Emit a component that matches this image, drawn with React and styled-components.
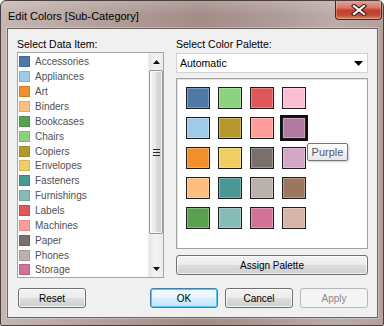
import React from "react";
import styled, { createGlobalStyle } from "styled-components";

const Global = createGlobalStyle`
  html, body { margin: 0; padding: 0; background: #ffffff; }
  body { font-family: "Liberation Sans", Arial, sans-serif; }
  * { box-sizing: border-box; }
`;

const Window = styled.div`
  width: 384px;
  height: 326px;
  border: 1px solid #4a3f3d;
  border-radius: 6px 6px 2px 2px;
  padding: 0 5px 7px 6px;
  display: flex;
  flex-direction: column;
  background:
    linear-gradient(to bottom, rgba(255,255,255,0.18) 0px, rgba(255,255,255,0) 14px),
    linear-gradient(to right, #c6b7b3 0%, #b09c98 30%, #a28c88 52%, #ad9995 70%, #bcaca8 88%, #b2a09c 100%);
  font-family: "Liberation Sans", Arial, sans-serif;
  overflow: hidden;
`;

const TitleBar = styled.div`
  height: 27px;
  display: flex;
  align-items: flex-start;
  padding-left: 1px;
`;

const Title = styled.div`
  font-size: 11px;
  color: #000;
  line-height: 14px;
  margin-top: 8px;
  flex: 1;
  white-space: nowrap;
`;

const CloseButton = styled.div`
  width: 47px;
  height: 20px;
  margin-top: -1px;
  margin-right: -4px;
  border: 1px solid #4d231d;
  border-top: none;
  border-radius: 0 0 4px 4px;
  background: linear-gradient(to bottom, #e7a89d 0%, #d67765 40%, #c2402e 55%, #c44a33 80%, #d88a6c 100%);
  box-shadow: inset 0 0 0 1px rgba(255,255,255,0.25);
  display: flex;
  align-items: center;
  justify-content: center;
`;

const Client = styled.div`
  flex: 1;
  border: 1px solid #6f625f;
  box-shadow: 0 0 0 1px rgba(255,255,255,0.3);
  background: #f0f0f0;
  display: flex;
  flex-direction: column;
  padding: 9px 9px 9px 9px;
`;

const Columns = styled.div`
  display: grid;
  grid-template-columns: 147px 192px;
  column-gap: 12px;
`;

const Column = styled.div`
  display: flex;
  flex-direction: column;
`;

const Label = styled.div`
  font-size: 10.5px;
  line-height: 12px;
  height: 14px;
  color: #000;
  white-space: nowrap;
`;

const ListBox = styled.div`
  height: 226px;
  border: 1px solid #a5a5a5;
  background: #fff;
  display: flex;
`;

const Items = styled.div`
  flex: 1;
  overflow: hidden;
  padding-top: 1.5px;
`;

const Item = styled.div`
  height: 14.86px;
  display: flex;
  align-items: center;
  padding-left: 1px;
  font-size: 10px;
  color: #505050;
  white-space: nowrap;
`;

const ItemSwatch = styled.span`
  width: 11px;
  height: 11px;
  margin-right: 5px;
  background: ${(p) => p.$color};
  border: 1px solid rgba(0,0,0,0.12);
  flex: none;
`;

const ScrollBar = styled.div`
  width: 15px;
  display: flex;
  flex-direction: column;
  background: linear-gradient(to right, #e6e6e6, #f3f3f3 40%, #ececec);
  border-left: 1px solid #eeeeee;
`;

const ArrowBox = styled.div`
  height: 17px;
  display: flex;
  align-items: center;
  justify-content: center;
`;

const TrackSpace = styled.div`
  flex: 1;
`;

const Thumb = styled.div`
  height: 164px;
  border: 1px solid #979797;
  border-radius: 2px;
  background: linear-gradient(to right, #f5f5f5 0%, #eaeaea 45%, #dadada 55%, #d2d2d2 100%);
  box-shadow: inset 0 0 0 1px rgba(255,255,255,0.7);
  display: flex;
  align-items: center;
  justify-content: center;
`;

const Grip = styled.div`
  width: 7px;
  height: 7px;
  background: repeating-linear-gradient(to bottom, #2a2a2a 0px, #2a2a2a 1px, transparent 1px, transparent 3px);
`;

const Select = styled.div`
  height: 20px;
  margin-top: 1px;
  border: 1px solid #d2d2d2;
  background: #fff;
  display: flex;
  align-items: center;
  justify-content: space-between;
  padding: 0 4px 0 3px;
  font-size: 10.5px;
  color: #000;
`;

const Palette = styled.div`
  position: relative;
  height: 171px;
  margin-top: 5px;
  border: 1px solid #a0a0a0;
  box-shadow: inset 1px 1px 0 #e3e3e3;
  background: #fff;
  display: grid;
  grid-template-columns: repeat(4, 24px);
  grid-auto-rows: 22px;
  column-gap: 8px;
  row-gap: 8px;
  align-content: start;
  padding: 8px 0 0 9px;
`;

const Swatch = styled.div`
  background: ${(p) => p.$color};
  border: 1px solid #1e1e1e;
  box-shadow: inset 0 0 0 1px rgba(255,255,255,0.28);
  outline: ${(p) => (p.$selected ? "2px solid #111" : "none")};
`;

const Tooltip = styled.div`
  position: absolute;
  left: 130px;
  top: 64px;
  width: 41px;
  height: 18px;
  border: 1px solid #767676;
  border-radius: 2px;
  background: linear-gradient(to bottom, #ffffff, #e6e7ef);
  box-shadow: 1px 1px 2px rgba(0,0,0,0.2);
  font-size: 11px;
  color: #575757;
  display: flex;
  align-items: center;
  justify-content: center;
`;

const Button = styled.div`
  height: 20px;
  width: ${(p) => p.$width || "68px"};
  border: 1px solid ${(p) => (p.$primary ? "#3c7fb1" : p.$disabled ? "#b5b9bc" : "#707070")};
  border-radius: 3px;
  background: ${(p) =>
    p.$disabled
      ? "#f4f4f4"
      : p.$primary
      ? "linear-gradient(to bottom, #f2f9fd 0%, #eaf6fd 50%, #d9f0fc 50%, #bee6fd 100%)"
      : "linear-gradient(to bottom, #f2f2f2 0%, #ebebeb 50%, #dddddd 50%, #cfcfcf 100%)"};
  box-shadow: ${(p) =>
    p.$primary ? "inset 0 0 0 1px #58c7f8" : p.$disabled ? "none" : "inset 0 0 0 1px rgba(255,255,255,0.75)"};
  color: ${(p) => (p.$disabled ? "#8a8a8a" : "#000")};
  font-size: 10px;
  display: flex;
  align-items: center;
  justify-content: center;
  white-space: nowrap;
`;

const AssignButton = styled(Button)`
  margin-top: 6px;
`;

const Footer = styled.div`
  margin-top: 10px;
  display: flex;
  justify-content: space-between;
  padding-left: 1px;
`;

const ButtonGroup = styled.div`
  display: flex;
  gap: 7px;
`;

const items = [
  ["Accessories", "#4e79a7"],
  ["Appliances", "#a0cbe8"],
  ["Art", "#f28e2b"],
  ["Binders", "#ffbe7d"],
  ["Bookcases", "#59a14f"],
  ["Chairs", "#8cd17d"],
  ["Copiers", "#b6992d"],
  ["Envelopes", "#f1ce63"],
  ["Fasteners", "#499894"],
  ["Furnishings", "#86bcb6"],
  ["Labels", "#e15759"],
  ["Machines", "#ff9d9a"],
  ["Paper", "#79706e"],
  ["Phones", "#bab0ac"],
  ["Storage", "#d37295"],
];

const palette = [
  "#4e79a7", "#8cd17d", "#e15759", "#fabfd2",
  "#a0cbe8", "#b6992d", "#ff9d9a", "#b07aa1",
  "#f28e2b", "#f1ce63", "#79706e", "#d4a6c8",
  "#ffbe7d", "#499894", "#bab0ac", "#9d7660",
  "#59a14f", "#86bcb6", "#d37295", "#d7b5a6",
];

const Tri = ({ up }) => (
  <svg width="7" height="4" viewBox="0 0 7 4">
    <path d={up ? "M0 4 L3.5 0 L7 4 Z" : "M0 0 L7 0 L3.5 4 Z"} fill="#111" />
  </svg>
);

export default function App() {
  return (
    <>
      <Global />
      <Window>
        <TitleBar>
          <Title>Edit Colors [Sub-Category]</Title>
          <CloseButton>
            <svg width="16" height="12" viewBox="0 0 16 12">
              <path d="M3 2 L13 10 M13 2 L3 10" stroke="#3b1712" strokeWidth="4.2" strokeLinecap="square" />
              <path d="M3 2 L13 10 M13 2 L3 10" stroke="#ffffff" strokeWidth="2.2" strokeLinecap="square" />
            </svg>
          </CloseButton>
        </TitleBar>
        <Client>
          <Columns>
            <Column>
              <Label>Select Data Item:</Label>
              <ListBox>
                <Items>
                  {items.map(([name, color]) => (
                    <Item key={name}>
                      <ItemSwatch $color={color} />
                      {name}
                    </Item>
                  ))}
                </Items>
                <ScrollBar>
                  <ArrowBox>
                    <Tri up />
                  </ArrowBox>
                  <Thumb>
                    <Grip />
                  </Thumb>
                  <TrackSpace />
                  <ArrowBox>
                    <Tri />
                  </ArrowBox>
                </ScrollBar>
              </ListBox>
            </Column>
            <Column>
              <Label>Select Color Palette:</Label>
              <Select>
                <span>Automatic</span>
                <svg width="9" height="5" viewBox="0 0 9 5">
                  <path d="M0 0 L9 0 L4.5 5 Z" fill="#000" />
                </svg>
              </Select>
              <Palette>
                {palette.map((c, i) => (
                  <Swatch key={i} $color={c} $selected={i === 7} />
                ))}
                <Tooltip>Purple</Tooltip>
              </Palette>
              <AssignButton $width="192px">Assign Palette</AssignButton>
            </Column>
          </Columns>
          <Footer>
            <Button>Reset</Button>
            <ButtonGroup>
              <Button $primary>OK</Button>
              <Button>Cancel</Button>
              <Button $disabled>Apply</Button>
            </ButtonGroup>
          </Footer>
        </Client>
      </Window>
    </>
  );
}
